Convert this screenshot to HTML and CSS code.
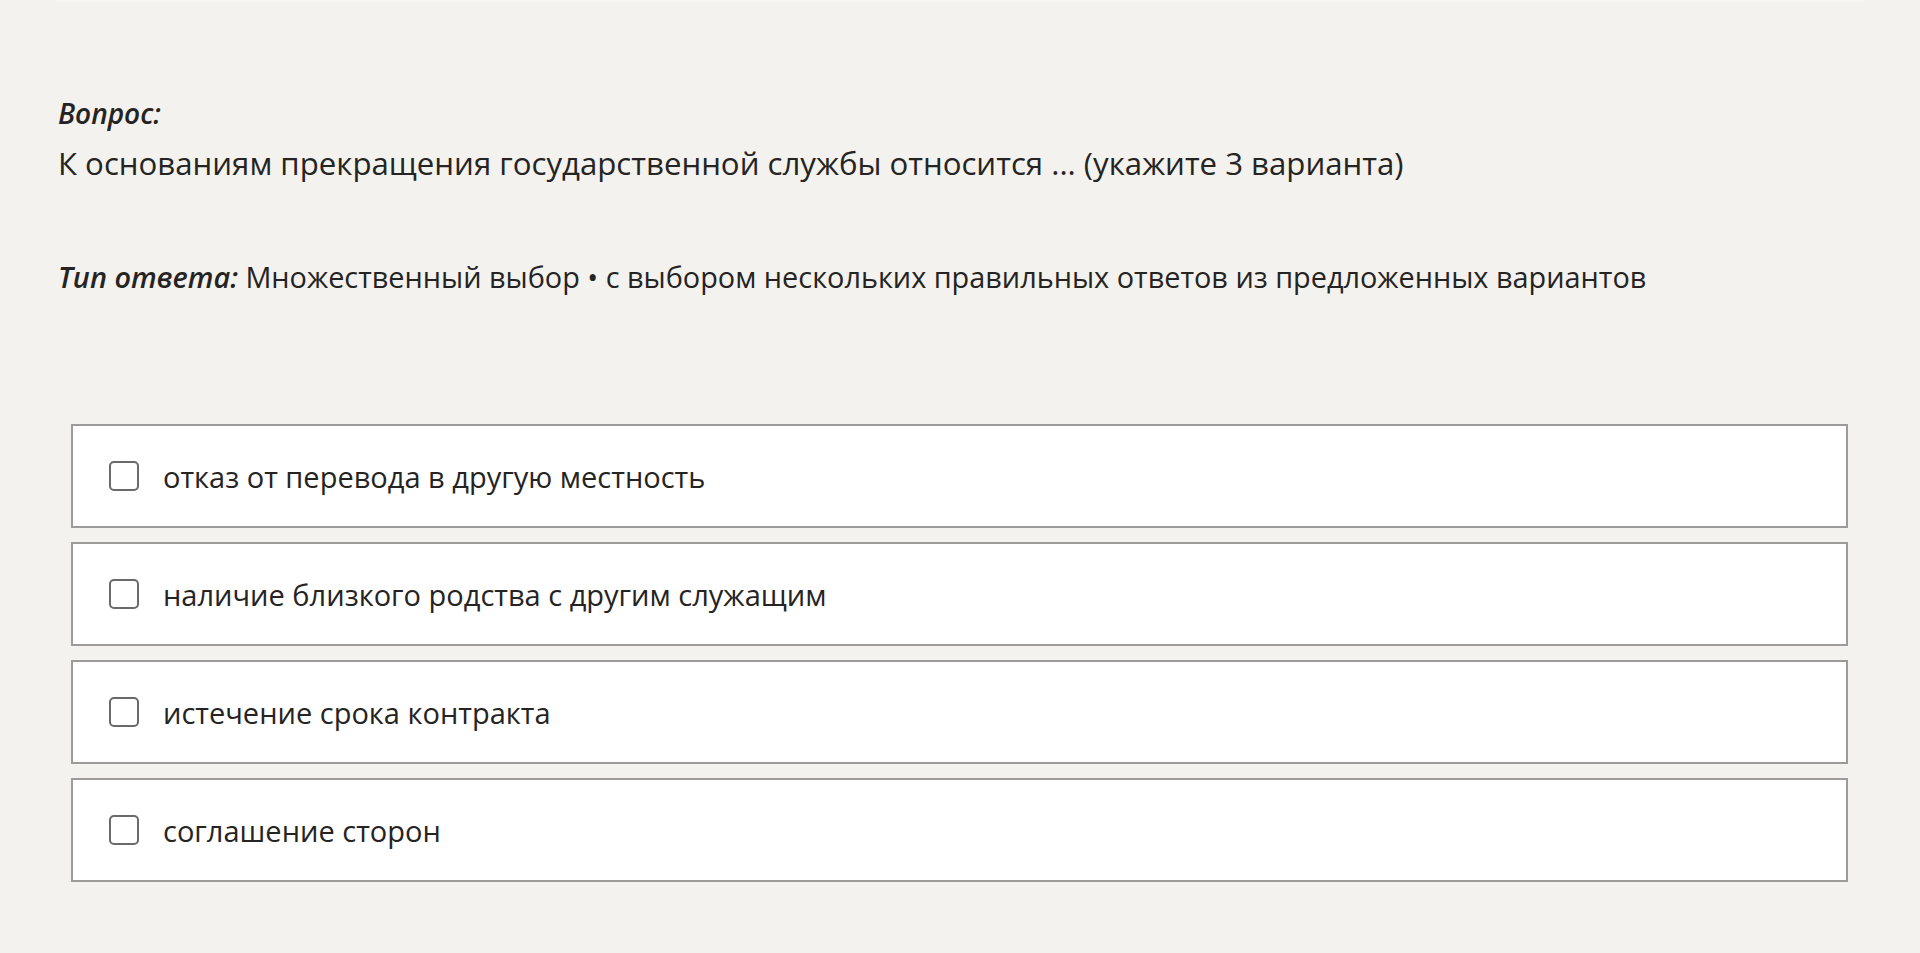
FILE: index.html
```html
<!DOCTYPE html>
<html lang="ru">
<head>
<meta charset="utf-8">
<title>Вопрос</title>
<link rel="stylesheet" href="styles.css">
</head>
<body>
<div class="top-strip"></div>
<main class="page">
  <section class="question">
    <div class="label">Вопрос:</div>
    <div class="q-text">К основаниям прекращения государственной службы относится ... (укажите 3 варианта)</div>
  </section>
  <div class="answer-type"><span class="label">Тип ответа:</span> Множественный выбор • с выбором нескольких правильных ответов из предложенных вариантов</div>
  <ul class="options">
    <li class="option"><span class="checkbox"></span><span class="opt-text">отказ от перевода в другую местность</span></li>
    <li class="option"><span class="checkbox"></span><span class="opt-text">наличие близкого родства с другим служащим</span></li>
    <li class="option"><span class="checkbox"></span><span class="opt-text">истечение срока контракта</span></li>
    <li class="option"><span class="checkbox"></span><span class="opt-text">соглашение сторон</span></li>
  </ul>
</main>
</body>
</html>
```
FILE: styles.css
```css
html, body {
  margin: 0;
  padding: 0;
}
body {
  background: #f3f2ee;
  color: #252423;
  font-family: "Open Sans", "Noto Sans", "DejaVu Sans", sans-serif;
  height: 953px;
  overflow: hidden;
}
.top-strip {
  height: 2px;
  margin: 0 56px 0 56px;
  background: #f8f7f4;
}
.page {
  padding: 0 0 0 58px;
}
.question {
  padding-top: 92px;
}
.label {
  font-weight: 600;
  font-style: italic;
  font-size: 28px;
  line-height: 38px;
}
.q-text {
  font-size: 31.2px;
  line-height: 38px;
  margin-top: 12px;
}
.answer-type {
  margin-top: 76px;
  font-size: 28.85px;
  line-height: 38px;
}
.answer-type .label {
  display: inline;
  font-size: 28.85px;
}
.options {
  list-style: none;
  margin: 128px 0 0 13px;
  padding: 0;
  width: 1777px;
  display: flex;
  flex-direction: column;
  gap: 14px;
}
.option {
  box-sizing: border-box;
  height: 104px;
  background: #ffffff;
  border: 2px solid #9c9b99;
  display: flex;
  align-items: center;
  padding-left: 36px;
}
.checkbox {
  box-sizing: border-box;
  width: 30px;
  height: 30px;
  border: 2px solid #6b6a68;
  border-radius: 5px;
  flex: none;
}
.opt-text {
  margin-left: 24px;
  font-size: 29px;
}
```
